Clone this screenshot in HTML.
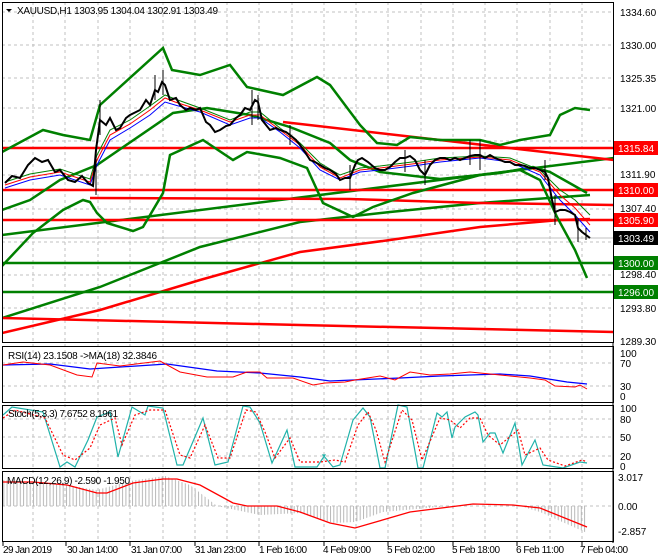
<!DOCTYPE html>
<html><head><meta charset="utf-8"><style>
html,body{margin:0;padding:0;background:#fff;}
svg{display:block;font-family:"Liberation Sans",sans-serif;font-size:10px;}
</style></head><body>
<svg width="660" height="560" viewBox="0 0 660 560" xmlns="http://www.w3.org/2000/svg">
<defs>
<pattern id="hb" width="3.3" height="10" patternUnits="userSpaceOnUse"><rect x="0" y="0" width="1" height="10" fill="#b8b8b8"/></pattern>
<clipPath id="cm"><rect x="2" y="2" width="612" height="340"/></clipPath>
</defs>
<rect width="660" height="560" fill="#fff"/>
<g stroke="#c0c0c0" stroke-dasharray="3,3" stroke-width="1">
<path d="M33 2V541M65 2V541M98 2V541M130 2V541M163 2V541M195 2V541M227 2V541M259 2V541M292 2V541M324 2V541M356 2V541M388 2V541M421 2V541M453 2V541M485 2V541M517 2V541M550 2V541M582 2V541"/>
<path d="M2 12H614M2 45H614M2 78H614M2 108H614M2 141H614M2 175H614M2 209H614M2 242H614M2 275H614M2 308H614"/>
<path d="M2 363H614M2 386H614M2 419H614M2 437H614M2 456H614M2 506H614"/>
</g>
<line x1="2" y1="238" x2="614" y2="238" stroke="#c0c0c0"/>
<g clip-path="url(#cm)" fill="none">
<polyline points="2,235 614,158" stroke="#008000" stroke-width="2.5"/>
<polyline points="2,318 100,287 200,247 300,222 390,212 480,203 590,195" stroke="#008000" stroke-width="2.5"/>
<polyline points="2,333 100,310 200,280 300,252 390,240 480,227 560,220 590,219" stroke="#ff0000" stroke-width="2.5"/>
<polyline points="2,318 300,325 614,332" stroke="#ff0000" stroke-width="2.5"/>
<polyline points="283,122 614,160" stroke="#ff0000" stroke-width="2.5"/>
<polyline points="90,198 350,199 480,203 614,205" stroke="#ff0000" stroke-width="2.5"/>
<line x1="2" y1="148" x2="614" y2="148" stroke="#ff0000" stroke-width="2.5"/>
<line x1="2" y1="190" x2="614" y2="190" stroke="#ff0000" stroke-width="2.5"/>
<line x1="2" y1="220" x2="614" y2="220" stroke="#ff0000" stroke-width="2.5"/>
<line x1="2" y1="263" x2="614" y2="263" stroke="#008000" stroke-width="2.5"/>
<line x1="2" y1="292" x2="614" y2="292" stroke="#008000" stroke-width="2.5"/>
<polyline points="2,152 43,130 63,135 90,140 100,105 163,48 172,70 200,75 230,65 247,87 283,95 317,77 330,85 345,105 360,125 377,143 397,145 410,137 440,140 480,140 500,145 520,140 550,135 560,115 575,108 590,110" stroke="#008000" stroke-width="2.5"/>
<polyline points="2,210 30,200 60,180 97,165 173,113 207,108 250,115 290,127 330,143 350,160 380,172 440,179 500,173 533,167 550,172 573,185 587,193" stroke="#008000" stroke-width="2.5"/>
<polyline points="2,266 33,233 63,210 83,200 90,202 97,213 107,223 133,231 143,227 163,193 170,155 203,140 233,160 247,152 280,158 307,168 323,203 353,217 373,207 413,193 480,175 520,170 540,180 557,217 575,250 587,278" stroke="#008000" stroke-width="2.5"/>
<polyline points="5,188 30,180 60,175 90,185 97,165 110,140 130,128 150,115 165,102 175,105 200,112 230,125 250,118 260,118 280,132 300,148 320,170 340,180 360,172 380,170 420,165 440,162 480,158 510,162 540,175 560,200 575,215 590,232" stroke="#0000ff" stroke-width="1"/>
<polyline points="5,185 30,177 60,172 90,182 97,160 110,135 130,124 150,110 165,98 175,102 200,110 230,122 250,115 260,115 280,130 300,145 320,167 340,178 360,170 380,168 420,163 440,160 480,157 510,160 540,172 560,195 575,208 590,225" stroke="#ff0000" stroke-width="1"/>
<polyline points="5,182 30,174 60,169 90,179 97,155 110,130 130,120 150,106 165,95 175,99 200,108 230,120 250,112 260,112 280,128 300,143 320,163 340,175 360,168 380,166 420,161 440,158 480,156 510,158 540,170 560,190 575,200 590,215" stroke="#008000" stroke-width="1"/>
<polyline points="5,183 12,176 20,178 28,165 35,158 42,162 48,160 55,172 60,170 68,180 75,182 82,176 88,183 93,186 96,150 100,120 106,125 110,118 116,130 120,128 126,118 130,115 136,112 140,110 146,100 150,105 155,90 158,92 162,82 165,85 170,100 176,98 180,105 186,110 190,108 196,110 200,108 206,122 210,125 215,132 220,130 226,126 230,125 236,118 240,115 245,108 250,110 255,100 258,102 262,120 266,125 270,130 276,128 280,130 286,132 290,135 296,140 300,145 305,152 310,160 315,162 320,165 325,168 330,170 336,174 340,180 345,178 350,178 355,165 358,160 362,158 368,162 375,168 380,170 385,170 390,167 395,162 400,158 405,158 410,156 415,160 420,170 425,175 430,165 435,160 440,158 445,158 450,160 455,158 460,160 465,158 470,156 475,155 480,155 485,158 490,155 495,158 500,160 505,162 510,162 515,165 520,165 525,166 530,168 535,168 540,170 545,172 548,178 552,200 555,212 560,210 565,210 570,212 575,215 578,228 582,232 586,235 590,238" stroke="#000" stroke-width="2"/>
<g stroke="#000" stroke-width="1">
<path d="M96 145V195M100 100V135M155 75V100M163 70V95M252 90V125M258 95V120M290 125V145M350 165V190M405 150V172M425 160V185M470 140V165M480 140V170M545 160V180M555 195V225M578 218V242M586 228V240"/>
</g>
</g>
<rect x="614" y="231" width="44" height="14" fill="#000"/>
<text x="618" y="242" fill="#fff" textLength="36">1303.49</text>
<rect x="614" y="141" width="44" height="14" fill="#ff0000"/><text x="618" y="152" fill="#fff" textLength="36">1315.84</text>
<rect x="614" y="183" width="44" height="14" fill="#ff0000"/><text x="618" y="194" fill="#fff" textLength="36">1310.00</text>
<rect x="614" y="213" width="44" height="14" fill="#ff0000"/><text x="618" y="224" fill="#fff" textLength="36">1305.90</text>
<rect x="614" y="256" width="44" height="14" fill="#008000"/><text x="618" y="267" fill="#fff" textLength="36">1300.00</text>
<rect x="614" y="285" width="44" height="14" fill="#008000"/><text x="618" y="296" fill="#fff" textLength="36">1296.00</text>
<g fill="#000">
<text x="620" y="16">1334.60</text><text x="620" y="49">1330.00</text><text x="620" y="82">1325.35</text>
<text x="620" y="112">1321.00</text><text x="620" y="178">1311.90</text><text x="620" y="212">1307.40</text>
<text x="620" y="278">1298.40</text><text x="620" y="312">1293.80</text><text x="620" y="345">1289.30</text>
<text x="620" y="357">100</text><text x="620" y="367">70</text><text x="620" y="390">30</text><text x="620" y="400">0</text>
<text x="620" y="412">100</text><text x="620" y="423">80</text><text x="620" y="441">50</text><text x="620" y="460">20</text><text x="620" y="470">0</text>
<text x="618" y="481">3.017</text><text x="618" y="510">0.00</text><text x="618" y="535">-2.857</text>
</g>
<polyline fill="none" stroke="#0000ff" stroke-width="1.3" points="3,365 50,364 90,369 167,364 217,371 260,373 300,377 330,381 400,378 440,376 500,374 530,376 567,382 587,384"/>
<polyline fill="none" stroke="#ff0000" stroke-width="1" points="3,365 23,362 50,365 77,375 92,377 97,363 120,366 160,361 180,372 207,377 233,377 247,372 260,372 267,378 293,378 313,385 325,383 345,382 355,380 380,376 395,380 410,372 430,375 450,374 470,372 490,374 510,376 530,378 545,380 555,386 575,387 580,385 587,389"/>
<polyline fill="none" stroke="#20b2aa" stroke-width="1.2" points="3,415 12,407 43,412 60,467 67,462 75,467 88,440 97,417 110,412 118,457 132,407 145,415 148,406 163,408 177,465 183,465 203,418 215,465 228,462 243,406 250,407 260,423 272,463 287,430 295,467 317,467 325,455 323,455 333,467 340,465 353,420 363,408 370,417 380,468 385,468 398,405 407,407 418,468 423,468 437,413 442,417 447,412 452,438 455,427 465,417 475,412 478,415 483,442 490,433 495,433 503,453 515,423 522,465 535,440 543,465 563,468 580,462 587,463"/>
<polyline fill="none" stroke="#ff0000" stroke-width="1.2" stroke-dasharray="2,2" points="3,418 15,410 45,418 63,455 75,460 90,448 100,425 115,418 122,445 135,415 150,410 165,410 180,455 190,458 205,425 218,458 230,458 246,410 256,412 265,432 275,458 290,438 300,462 320,462 335,460 345,462 358,425 368,412 376,430 385,462 402,410 412,420 422,460 440,418 450,420 460,428 470,418 480,418 488,435 500,445 518,430 525,455 540,448 548,460 565,466 582,460 587,462"/>
<polygon fill="url(#hb)" points="3,506 3,480 60,484 97,490 130,481 165,476 190,485 217,506 260,515 300,513 333,523 355,522 383,512 450,506 520,506 540,512 587,533 587,506"/>
<polyline fill="none" stroke="#ff0000" stroke-width="1.3" points="3,482 33,482 67,485 97,493 107,493 133,483 163,479 177,479 200,485 233,503 247,506 277,506 300,512 330,523 355,528 410,512 473,504 513,505 540,508 587,527"/>
<g fill="none" stroke="#000" stroke-width="1">
<rect x="2.5" y="2.5" width="611" height="340"/>
<rect x="2.5" y="346.5" width="611" height="56"/>
<rect x="2.5" y="405.5" width="611" height="63"/>
<rect x="2.5" y="471.5" width="611" height="70"/>
</g>
<g stroke="#000"><path d="M613 342V543M3 542V546M66 542V546M130 542V546M195 542V546M259 542V546M324 542V546M388 542V546M453 542V546M517 542V546M582 542V546"/></g>
<path d="M6 9L12 9L9 12Z" fill="#000"/>
<g fill="#000">
<text x="17" y="14" textLength="201">XAUUSD,H1  1303.95 1304.04 1302.91 1303.49</text>
<text x="8" y="359" textLength="149">RSI(14) 23.1508  ->MA(18) 32.3846</text>
<text x="8" y="417" textLength="110">Stoch(5,3,3) 7.6752 8.1961</text>
<text x="7" y="484" textLength="123">MACD(12,26,9) -2.590 -1.950</text>
<text x="3" y="553" textLength="49">29 Jan 2019</text>
<text x="67" y="553" textLength="51">30 Jan 14:00</text>
<text x="131" y="553" textLength="51">31 Jan 07:00</text>
<text x="195" y="553" textLength="51">31 Jan 23:00</text>
<text x="259" y="553" textLength="48">1 Feb 16:00</text>
<text x="323" y="553" textLength="48">4 Feb 09:00</text>
<text x="387" y="553" textLength="48">5 Feb 02:00</text>
<text x="452" y="553" textLength="48">5 Feb 18:00</text>
<text x="516" y="553" textLength="48">6 Feb 11:00</text>
<text x="580" y="553" textLength="48">7 Feb 04:00</text>
</g>
</svg>
</body></html>
